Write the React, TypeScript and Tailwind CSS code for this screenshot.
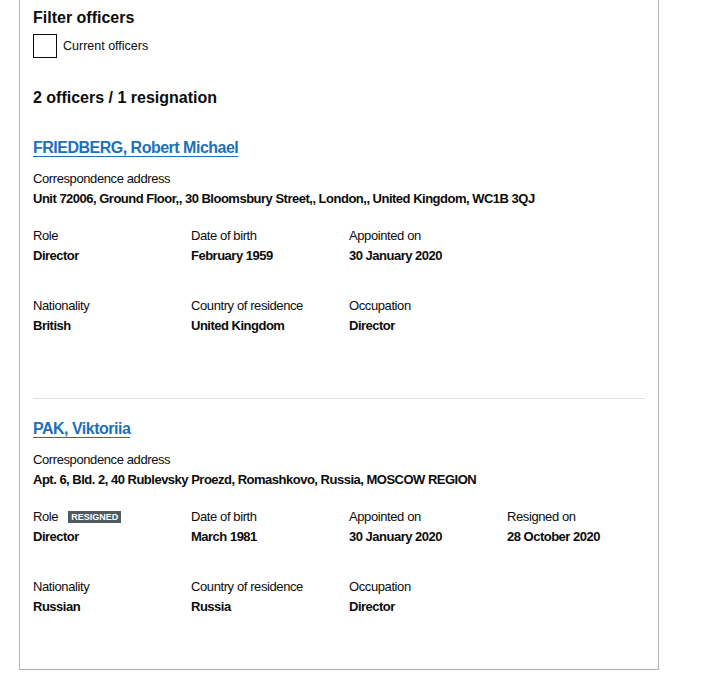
const FONT = { fontFamily: '"Liberation Sans", Arial, sans-serif' };

type Field = { label: string; value: string; badge?: string };

type Officer = {
  name: string;
  address: string;
  rows: Field[][];
};

const OFFICERS: Officer[] = [
  {
    name: "FRIEDBERG, Robert Michael",
    address: "Unit 72006, Ground Floor,, 30 Bloomsbury Street,, London,, United Kingdom, WC1B 3QJ",
    rows: [
      [
        { label: "Role", value: "Director" },
        { label: "Date of birth", value: "February 1959" },
        { label: "Appointed on", value: "30 January 2020" },
      ],
      [
        { label: "Nationality", value: "British" },
        { label: "Country of residence", value: "United Kingdom" },
        { label: "Occupation", value: "Director" },
      ],
    ],
  },
  {
    name: "PAK, Viktoriia",
    address: "Apt. 6, Bld. 2, 40 Rublevsky Proezd, Romashkovo, Russia, MOSCOW REGION",
    rows: [
      [
        { label: "Role", value: "Director", badge: "Resigned" },
        { label: "Date of birth", value: "March 1981" },
        { label: "Appointed on", value: "30 January 2020" },
        { label: "Resigned on", value: "28 October 2020" },
      ],
      [
        { label: "Nationality", value: "Russian" },
        { label: "Country of residence", value: "Russia" },
        { label: "Occupation", value: "Director" },
      ],
    ],
  },
];

function OfficerBlock({ officer }: { officer: Officer }) {
  return (
    <div>
      <h3 className="text-[16px] font-bold leading-[20px] tracking-[-0.5px]">
        <a href="#" className="text-[#1d70b8] underline underline-offset-[3px] decoration-1">
          {officer.name}
        </a>
      </h3>
      <dl className="mt-[12px] text-[13px] leading-[18px] tracking-[-0.4px] text-[#0b0c0c]">
        <dt>Correspondence address</dt>
        <dd className="mt-[2px] font-bold tracking-[-0.5px]">{officer.address}</dd>
      </dl>
      {officer.rows.map((row, i) => (
        <div key={i} className={`grid grid-cols-[repeat(4,158px)] ${i === 0 ? "mt-[19px]" : "mt-[32px]"}`}>
          {row.map((f) => (
            <dl key={f.label} className="text-[13px] leading-[18px] tracking-[-0.4px] text-[#0b0c0c]">
              <dt className="flex items-center gap-[10px]">
                {f.label}
                {f.badge && (
                  <span className="bg-[#505a5f] px-[3px] text-[9px] font-bold uppercase leading-[12px] tracking-[0px] text-white">
                    {f.badge}
                  </span>
                )}
              </dt>
              <dd className="mt-[2px] font-bold tracking-[-0.5px]">{f.value}</dd>
            </dl>
          ))}
        </div>
      ))}
    </div>
  );
}

export default function App() {
  return (
    <div className="min-h-[682px] bg-white text-[#0b0c0c]" style={FONT}>
      <div className="ml-[19px] w-[640px] border border-t-0 border-[#b1b4b6] px-[13px] pb-[53px] pt-[8px]">
        <h2 className="text-[16px] font-bold leading-[20px]">Filter officers</h2>
        <label className="mt-[6px] flex items-center gap-[6px]">
          <span className="h-[24px] w-[24px] border border-[#0b0c0c] bg-white" />
          <span className="text-[12.5px] leading-[16px]">Current officers</span>
        </label>
        <h2 className="mt-[30px] text-[16px] font-bold leading-[20px]">2 officers / 1 resignation</h2>
        <div className="mt-[30px]">
          <OfficerBlock officer={OFFICERS[0]} />
        </div>
        <hr className="mt-[63px] border-0 border-t border-[#e1e1e1]" />
        <div className="mt-[20px]">
          <OfficerBlock officer={OFFICERS[1]} />
        </div>
      </div>
    </div>
  );
}
